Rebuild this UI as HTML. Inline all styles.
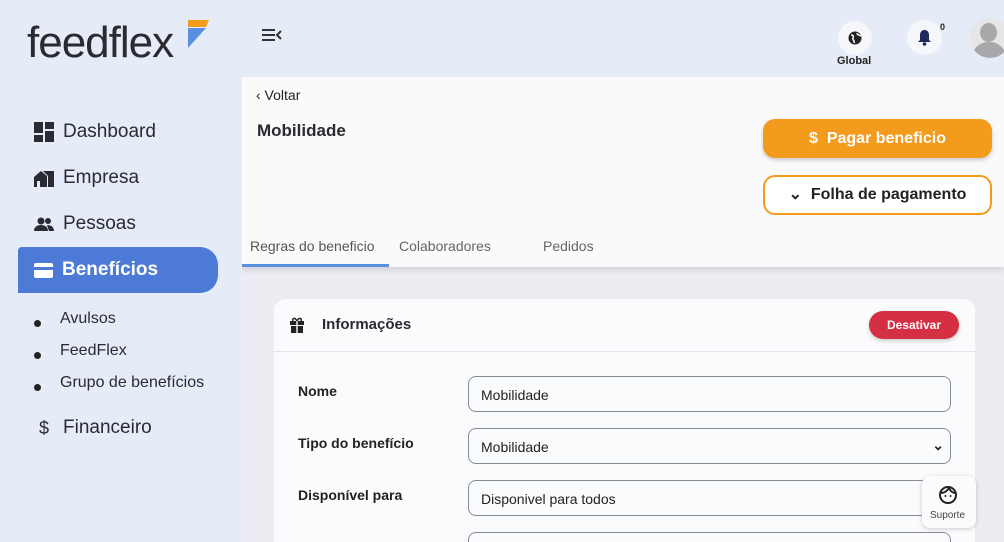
<!DOCTYPE html>
<html style="width:1004px;height:542px;overflow:hidden"><head><meta charset="utf-8"><style>
*{box-sizing:border-box;margin:0;padding:0}
body{width:1004px;height:542px;overflow:hidden;background:#e5ecf8;font-family:"Liberation Sans",sans-serif;position:relative;color:#222}
.abs{position:absolute}
.nav{position:absolute;left:34px;font-size:19px;color:#2a2a33;display:flex;align-items:center}
.nav svg{margin-right:9px}
.sub{position:absolute;left:60px;font-size:16px;color:#2a2a33}
.dot{position:absolute;left:34px;width:7px;height:7px;border-radius:50%;background:#222}
.lbl{position:absolute;left:298px;font-size:14px;font-weight:bold;color:#222}
.inp{position:absolute;left:468px;width:483px;height:36px;border:1px solid #8a8d99;border-radius:8px;background:#fafbfd;font-size:14px;padding:10px 12px;color:#222}
</style></head><body>
<div class="abs" style="left:27px;top:18px;font-size:44px;letter-spacing:-1px;color:#2a2a30">feedflex</div>
<svg class="abs" style="left:185px;top:20px" width="24" height="30"><polygon points="3,0 24,0 21,7 3,7" fill="#f29b1d"/><polygon points="3,8 21,8 3,28" fill="#5b8fe0"/></svg>
<svg class="abs" style="left:261px;top:28px" width="22" height="14"><path d="M1 2h13M1 7h13M1 12h13M20 3l-4 4 4 4" stroke="#333" stroke-width="2" fill="none"/></svg>
<div class="abs" style="left:838px;top:21px;width:34px;height:34px;border-radius:50%;background:#f5f7fb"></div>
<svg class="abs" style="left:848px;top:31px" width="14" height="14"><circle cx="7" cy="7" r="6.5" fill="#222"/><path d="M3 4c2 0 3 1 2 3s2 2 1 5M9 2c0 2 2 2 4 3" stroke="#fff" stroke-width="1.5" fill="none"/></svg>
<div class="abs" style="left:837px;top:55px;font-size:11px;font-weight:bold;color:#222">Global</div>
<div class="abs" style="left:907px;top:20px;width:35px;height:35px;border-radius:50%;background:#f5f7fb"></div>
<svg class="abs" style="left:917px;top:29px" width="15" height="17"><path d="M7.5 1c-3 0-4.5 2.5-4.5 5v5l-2 2h13l-2-2V6c0-2.5-1.5-5-4.5-5z" fill="#1f2a5c"/><circle cx="7.5" cy="15" r="1.8" fill="#1f2a5c"/></svg>
<div class="abs" style="left:940px;top:22px;font-size:9px;font-weight:bold">0</div>
<div class="abs" style="left:970px;top:18px;width:34px;height:40px;overflow:hidden"><div class="abs" style="left:0;top:0;width:40px;height:40px;border-radius:50%;background:#e6e6e8;overflow:hidden"><div class="abs" style="left:10px;top:5px;width:17px;height:19px;border-radius:50%;background:#a8a8ab"></div><div class="abs" style="left:2px;top:24px;width:34px;height:22px;border-radius:16px 16px 0 0;background:#a8a8ab"></div></div></div>
<div class="nav" style="top:121px"><svg width="20" height="20"><rect x="0" y="0" width="9" height="11" fill="#2a2a33"/><rect x="11" y="0" width="9" height="7" fill="#2a2a33"/><rect x="0" y="13" width="9" height="7" fill="#2a2a33"/><rect x="11" y="9" width="9" height="11" fill="#2a2a33"/></svg>Dashboard</div>
<div class="nav" style="top:167px"><svg width="20" height="18"><path d="M0 8l7-6 6 5V18H0z M9 2h11v16h-6V7z" fill="#2a2a33"/><rect x="3" y="12" width="3" height="6" fill="#e5ecf8"/></svg>Empresa</div>
<div class="nav" style="top:213px"><svg width="20" height="16"><circle cx="7" cy="5" r="3.5" fill="#2a2a33"/><circle cx="14" cy="5" r="3" fill="#2a2a33"/><path d="M0 15c0-4 3-6 7-6s7 2 7 6zM13 9c4 0 7 2 7 6h-5" fill="#2a2a33"/></svg>Pessoas</div>
<div class="abs" style="left:18px;top:247px;width:200px;height:46px;background:#4d7ad6;border-radius:0 18px 18px 0;border-top-left-radius:4px"></div>
<div class="nav" style="top:259px;color:#fff;font-weight:bold"><svg width="19" height="15"><rect width="19" height="15" rx="2" fill="#fff"/><rect y="4" width="19" height="3" fill="#4d7ad6"/></svg>Benefícios</div>
<div class="dot" style="top:320px"></div><div class="sub" style="top:310px">Avulsos</div>
<div class="dot" style="top:352px"></div><div class="sub" style="top:342px">FeedFlex</div>
<div class="dot" style="top:384px"></div><div class="sub" style="top:374px">Grupo de benefícios</div>
<div class="nav" style="top:417px"><span style="width:20px;text-align:center;margin-right:9px;font-size:18px">$</span>Financeiro</div>
<div class="abs" style="left:242px;top:77px;width:762px;height:465px;background:#ececf2;overflow:hidden">
<div class="abs" style="left:0;top:0;width:762px;height:190px;background:#fafafb;box-shadow:0 3px 6px rgba(0,0,0,.12)"></div>
<div class="abs" style="left:32px;top:222px;width:701px;height:300px;background:#fafbfd;border-radius:12px"></div>
<div class="abs" style="left:32px;top:274px;width:701px;height:1px;background:#e3e4ea"></div>
<div class="inp" style="left:226px;top:455px"></div>
</div>
<div class="abs" style="left:256px;top:87px;font-size:14px;color:#222">‹&nbsp;Voltar</div>
<div class="abs" style="left:257px;top:121px;font-size:17px;font-weight:bold;color:#2a2a30">Mobilidade</div>
<div class="abs" style="left:763px;top:119px;width:229px;height:39px;border-radius:12px;background:#f29b1d;color:#fff;font-weight:bold;font-size:16px;text-align:center;line-height:39px;box-shadow:0 2px 4px rgba(0,0,0,.2)">$&nbsp;&nbsp;Pagar beneficio</div>
<div class="abs" style="left:763px;top:175px;width:229px;height:40px;border-radius:12px;border:2px solid #f29b1d;background:#fff;color:#222;font-weight:bold;font-size:16px;text-align:center;line-height:36px">⌄&nbsp; Folha de pagamento</div>
<div class="abs" style="left:250px;top:238px;font-size:14px;color:#555">Regras do beneficio</div>
<div class="abs" style="left:399px;top:238px;font-size:14px;color:#666">Colaboradores</div>
<div class="abs" style="left:543px;top:238px;font-size:14px;color:#666">Pedidos</div>
<div class="abs" style="left:242px;top:264px;width:147px;height:3px;background:#5b8fe0"></div>
<svg class="abs" style="left:290px;top:317px" width="14" height="16"><rect x="0" y="4" width="14" height="4" fill="#222"/><rect x="1" y="9" width="12" height="7" fill="#222"/><path d="M7 4C5 0 2 1 3 4M7 4c2-4 5-3 4 0" stroke="#222" stroke-width="1.5" fill="none"/><rect x="6.3" y="4" width="1.4" height="12" fill="#fafbfd"/></svg>
<div class="abs" style="left:322px;top:316px;font-size:15px;font-weight:bold;color:#2a2a30">Informações</div>
<div class="abs" style="left:869px;top:311px;width:90px;height:28px;border-radius:14px;background:#d42f43;color:#fff;font-size:12px;font-weight:bold;text-align:center;line-height:28px;box-shadow:0 2px 4px rgba(0,0,0,.2)">Desativar</div>
<div class="lbl" style="top:383px">Nome</div>
<div class="lbl" style="top:435px">Tipo do benefício</div>
<div class="lbl" style="top:487px">Disponível para</div>
<div class="inp" style="top:376px">Mobilidade</div>
<div class="inp" style="top:428px">Mobilidade<span style="position:absolute;right:6px;top:8px;font-weight:bold">⌄</span></div>
<div class="inp" style="top:480px">Disponivel para todos</div>
<div class="abs" style="left:922px;top:476px;width:54px;height:52px;background:#fafbfd;border-radius:8px;box-shadow:0 1px 5px rgba(0,0,0,.2)"></div>
<svg class="abs" style="left:938px;top:485px" width="20" height="20"><circle cx="10" cy="10" r="8" fill="none" stroke="#222" stroke-width="2"/><path d="M3 8c3 0 6-2 8-5 1 3 4 5 6 5" stroke="#222" stroke-width="2" fill="none"/><circle cx="7.5" cy="11" r="1" fill="#222"/><circle cx="12.5" cy="11" r="1" fill="#222"/></svg>
<div class="abs" style="left:930px;top:510px;font-size:10px;color:#444">Suporte</div>
</body></html>
